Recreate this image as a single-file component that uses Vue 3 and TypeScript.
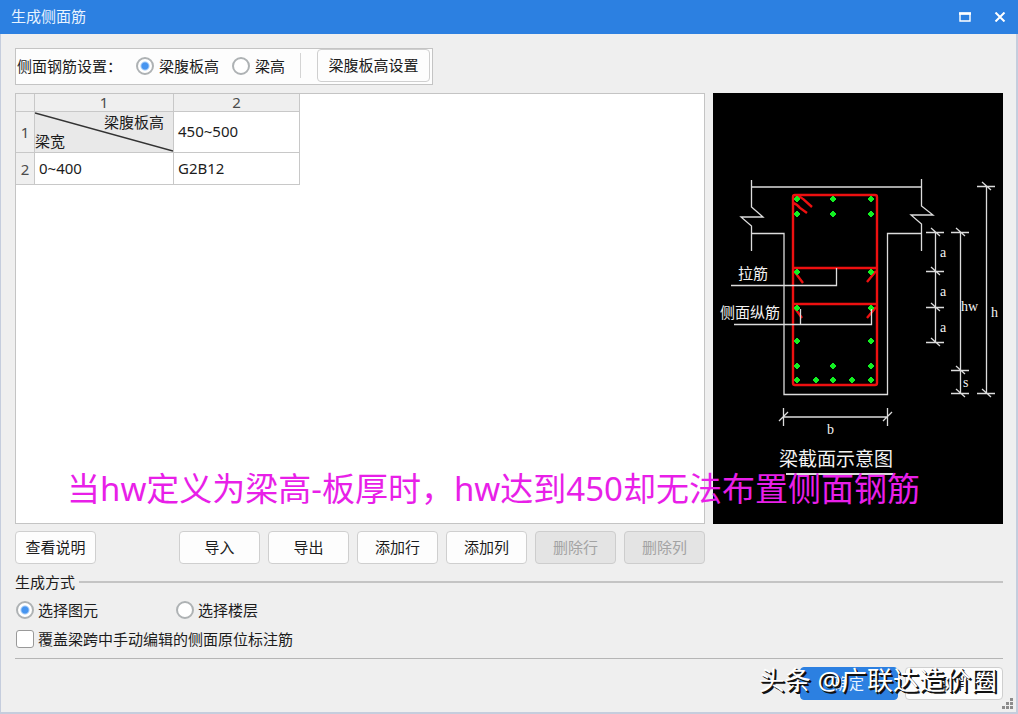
<script setup lang="ts">
import { ref } from 'vue'

type Point = [number, number]

const heightMode = ref('web')
const scope = ref('element')
const override = ref(false)

const editActions = [
  { label: '导入', disabled: false },
  { label: '导出', disabled: false },
  { label: '添加行', disabled: false },
  { label: '添加列', disabled: false },
  { label: '删除行', disabled: true },
  { label: '删除列', disabled: true },
]

// Rebar positions inside the beam section
const bars: Point[] = [
  [84, 106], [120, 106], [158, 106],
  [84, 121], [120, 121], [158, 121],
  [84, 179], [158, 179],
  [84, 215], [158, 215],
  [84, 248], [158, 248],
  [84, 273], [120, 273], [158, 273],
  [84, 287], [103, 287], [120, 287], [139, 287], [158, 287],
]

// Arrow ends of the vertical dimension lines
const ticks: Point[] = [
  [222, 140], [222, 179], [222, 215], [222, 250],
  [247, 140], [247, 278], [247, 301],
  [273, 94], [273, 301],
]
</script>

<template>
  <div class="window">
    <header class="titlebar">
      <h1>生成侧面筋</h1>
      <div class="window-actions">
        <button type="button" aria-label="最大化">
          <svg width="12" height="10" viewBox="0 0 12 10">
            <path d="M1 1.5H11V9H1Z" fill="none" stroke="#fff" stroke-width="1.4" />
            <path d="M0 1.5H12" stroke="#fff" stroke-width="2.6" />
          </svg>
        </button>
        <button type="button" aria-label="关闭">
          <svg width="12" height="10" viewBox="0 0 12 10">
            <path d="M1.5 .5L10.5 9.5M10.5 .5L1.5 9.5" stroke="#fff" stroke-width="2" />
          </svg>
        </button>
      </div>
    </header>

    <main class="content">
      <div class="toolbar" role="radiogroup" aria-labelledby="mode-label">
        <span id="mode-label" class="toolbar-label">侧面钢筋设置：</span>
        <label class="choice"><input v-model="heightMode" type="radio" name="mode" value="web" />梁腹板高</label>
        <label class="choice"><input v-model="heightMode" type="radio" name="mode" value="full" />梁高</label>
        <span class="divider"></span>
        <button type="button" class="btn">梁腹板高设置</button>
      </div>

      <div class="workspace">
        <div class="table-panel">
          <table>
            <thead>
              <tr>
                <th class="index"></th>
                <th class="col-first">1</th>
                <th class="col-second">2</th>
              </tr>
            </thead>
            <tbody>
              <tr class="row-tall">
                <th class="index">1</th>
                <td class="corner">
                  <svg viewBox="0 0 138 40" preserveAspectRatio="none">
                    <path d="M0 1L138 39" stroke="#333" stroke-width="1.4" />
                  </svg>
                  <div class="corner-text">
                    <span class="corner-top">梁腹板高</span>
                    <span class="corner-bottom">梁宽</span>
                  </div>
                </td>
                <td>450~500</td>
              </tr>
              <tr class="row-normal">
                <th class="index">2</th>
                <td>0~400</td>
                <td>G2B12</td>
              </tr>
            </tbody>
          </table>
        </div>

        <svg class="diagram" viewBox="0 0 290 431" role="img" aria-label="梁截面示意图">
          <rect width="290" height="431" fill="#000" />
          <g class="outline">
            <path d="M38.5 94H208.5" />
            <path d="M38.5 87V114L50 124H28L38.5 133V158" />
            <path d="M208.5 86V113L220 122H198L208.5 131V158" />
            <path d="M38.5 140.5H71V301.5H174.5V140.5H208.5" />
            <path d="M70.5 324H174.5M70.5 315V333M174.5 315V333M66 328L75 319M170 328L179 319" />
            <path d="M222.5 140V250M247.5 140V301M273.5 94V301" />
            <g v-for="([x, y], i) in ticks" :key="i" :transform="`translate(${x} ${y})`">
              <path d="M-9 -.5H9M-4 -5L5 3" />
            </g>
          </g>
          <g class="stirrup">
            <path d="M82 102H162Q164 102 164 104V290Q164 292 162 292H82Q80 292 80 290V104Q80 102 82 102Z" />
            <path d="M80 175H164M80 211H164" />
            <path d="M82 105Q86 102 90 106L99 114M80 110Q84 111 87 115L94 120" />
            <path d="M81 178L90 190M163 178L154 189M81 214L89 225M163 214L154 225" />
          </g>
          <path
            v-for="([x, y], i) in bars"
            :key="i"
            class="bar"
            :transform="`translate(${x} ${y})`"
            d="M-1 -3H1V-2H2V-1H3V1H2V2H1V3H-1V2H-2V1H-3V-1H-2V-2H-1Z"
          />
          <g class="outline">
            <path d="M18 192.5H123.5V175M21 231.5H158.5V216M87.5 231V216" />
            <path d="M73 381H180" stroke-width="2" />
          </g>
          <g class="note">
            <text x="25" y="186">拉筋</text>
            <text x="7" y="225">侧面纵筋</text>
            <text class="caption" x="66" y="373">梁截面示意图</text>
          </g>
          <g class="dim">
            <text x="227" y="164">a</text>
            <text x="227" y="203">a</text>
            <text x="227" y="239">a</text>
            <text x="248" y="218">hw</text>
            <text x="278" y="224">h</text>
            <text x="250" y="294">s</text>
            <text x="114" y="341">b</text>
          </g>
        </svg>
        <p class="annotation">当hw定义为梁高-板厚时，hw达到450却无法布置侧面钢筋</p>
      </div>

      <div class="actions">
        <button type="button" class="btn">查看说明</button>
        <div class="edit-actions">
          <button v-for="a in editActions" :key="a.label" type="button" class="btn" :disabled="a.disabled">
            {{ a.label }}
          </button>
        </div>
      </div>

      <fieldset class="generate">
        <legend>生成方式</legend>
        <div class="scope">
          <label class="choice"><input v-model="scope" type="radio" name="scope" value="element" />选择图元</label>
          <label class="choice"><input v-model="scope" type="radio" name="scope" value="floor" />选择楼层</label>
        </div>
        <label class="choice check"><input v-model="override" type="checkbox" />覆盖梁跨中手动编辑的侧面原位标注筋</label>
      </fieldset>

      <footer class="footer">
        <button type="button" class="btn primary">确定</button>
        <button type="button" class="btn">取消</button>
        <span class="watermark">头条 @广联达造价圈</span>
      </footer>
    </main>

    <svg class="grip" width="11" height="11" viewBox="0 0 11 11">
      <path d="M8 0h3v3h-3zM4 4h3v3h-3zM8 4h3v3h-3zM0 8h3v3h-3zM4 8h3v3h-3zM8 8h3v3h-3z" fill="#8c8c8c" />
    </svg>
  </div>
</template>

<style>
body {
  margin: 0;
}
</style>

<style scoped>
.window {
  position: relative;
  display: flex;
  flex-direction: column;
  box-sizing: border-box;
  min-height: 100vh;
  border: solid #c5cddd;
  border-width: 0 2px 2px 1px;
  background: #efefef;
  color: #1c1c1c;
  font-family: "Noto Sans", "Noto Sans CJK SC", sans-serif;
  font-size: 15px;
  line-height: 20px;
}

button,
input {
  font: inherit;
  margin: 0;
}

.titlebar {
  display: flex;
  align-items: center;
  justify-content: space-between;
  height: 34px;
  margin: 0 -2px 0 -1px;
  padding: 0 12px 0 11px;
  background: #2c80e1;
  color: #e8f3ff;
}

h1 {
  margin: 0;
  padding-bottom: 2px;
  font-size: 15px;
  font-weight: 400;
}

.window-actions {
  display: flex;
  gap: 23px;
}

.window-actions button {
  display: flex;
  padding: 0;
  border: 0;
  background: none;
}

.content {
  display: flex;
  flex-direction: column;
  padding: 14px 13px 12px 14px;
}

.toolbar {
  display: flex;
  align-items: center;
  align-self: flex-start;
  box-sizing: border-box;
  height: 37px;
  padding: 0 2px 2px 1px;
  border: 1px solid #c4c4c4;
  background: #fdfdfd;
}

.toolbar-label {
  margin-right: 14px;
}

.toolbar .choice + .choice {
  margin-left: 13px;
}

.divider {
  width: 1px;
  height: 25px;
  margin: 0 16px 0 15px;
  background: #d4d4d4;
}

.choice {
  display: flex;
  align-items: center;
  gap: 5px;
}

.choice input {
  appearance: none;
  box-sizing: border-box;
  width: 18px;
  height: 18px;
  border: 2px solid #aeb2b4;
  border-radius: 50%;
  background: #fff;
}

.choice input[type="radio"]:checked {
  background: radial-gradient(circle, #4795f0 0 3px, #fff 5px);
}

.choice input[type="checkbox"] {
  border-width: 1px;
  border-color: #999;
  border-radius: 3px;
}

.choice input[type="checkbox"]:checked {
  background: #4795f0;
}

.btn {
  box-sizing: border-box;
  min-width: 81px;
  height: 33px;
  padding: 0 9px 1px;
  border: 1px solid #cfcfcf;
  border-radius: 4px;
  background: #fdfdfd;
  color: #1c1c1c;
  line-height: 20px;
}

.toolbar .btn {
  min-width: 113px;
}

.btn:disabled {
  border-color: #cdcdcd;
  background: #e4e4e4;
  color: #a3a3a3;
}

.workspace {
  position: relative;
  display: flex;
  gap: 8px;
  margin-top: 8px;
}

.table-panel {
  flex: 1;
  border: 1px solid #c4c4c4;
  background: #fff;
}

table {
  border-spacing: 0;
  table-layout: fixed;
  width: 284px;
}

th,
td {
  box-sizing: border-box;
  padding: 0 4px 2px;
  border: solid #c8c8c8;
  border-width: 0 1px 1px 0;
  text-align: left;
  font-weight: 400;
}

thead th {
  height: 18px;
  line-height: 17px;
}

th {
  padding: 0;
  background: #efefef;
  color: #4c4c4c;
  text-align: center;
}

.index {
  width: 19px;
}

.col-first {
  width: 139px;
}

.col-second {
  width: 126px;
}

.row-tall {
  height: 41px;
}

.row-normal {
  height: 32px;
}

.corner {
  position: relative;
  padding: 0;
  background: #e9e9e9;
}

.corner svg {
  position: absolute;
  inset: 0;
  width: 100%;
  height: 100%;
}

.corner-text {
  display: flex;
  flex-direction: column;
  line-height: 19px;
}

.corner-top {
  align-self: flex-end;
  margin-right: 9px;
}

.diagram {
  display: block;
  flex: none;
  width: 290px;
}

.outline {
  fill: none;
  stroke: #dcdcdc;
  stroke-width: 1.3;
}

.stirrup {
  fill: none;
  stroke: #ee1010;
  stroke-width: 2.4;
}

.bar {
  fill: #12f022;
}

.note {
  fill: #f2f2f2;
  font-size: 15px;
}

.caption {
  font-size: 19px;
}

.dim {
  fill: #f2f2f2;
  font-family: "Liberation Serif", serif;
  font-size: 14px;
}

.annotation {
  position: absolute;
  left: 52px;
  bottom: 13px;
  margin: 0;
  color: #e81fe8;
  font-size: 33px;
  line-height: 44px;
  white-space: nowrap;
}

.actions {
  display: flex;
  justify-content: space-between;
  margin: 7px 298px 0 0;
}

.edit-actions {
  display: flex;
  gap: 8px;
}

.generate {
  min-width: 0;
  margin: 8px 0 0;
  padding: 0 0 9px;
  border: 0;
  border-bottom: 1px solid #b5b5b5;
}

legend {
  display: flex;
  align-items: center;
  gap: 4px;
  width: 100%;
  padding: 0;
}

legend::after {
  flex: 1;
  height: 2px;
  background: #c4c4c4;
  content: "";
}

.generate .choice {
  gap: 4px;
}

.scope {
  display: flex;
  gap: 78px;
  margin: 8px 0 9px 1px;
}

.check {
  margin-left: 1px;
}

.footer {
  position: relative;
  display: flex;
  justify-content: flex-end;
  gap: 7px;
  margin-top: 8px;
}

.footer .btn {
  width: 98px;
}

.footer .primary {
  border-color: #2c80e1;
  background: #2c80e1;
  color: #e8f3ff;
}

.watermark {
  position: absolute;
  right: 6px;
  top: -5px;
  color: #fff;
  font-size: 26px;
  line-height: 36px;
  text-shadow: 1px 1px 0 #111, 2px 2px 0 #111;
  white-space: nowrap;
}

.grip {
  position: absolute;
  right: 3px;
  bottom: 3px;
}
</style>
